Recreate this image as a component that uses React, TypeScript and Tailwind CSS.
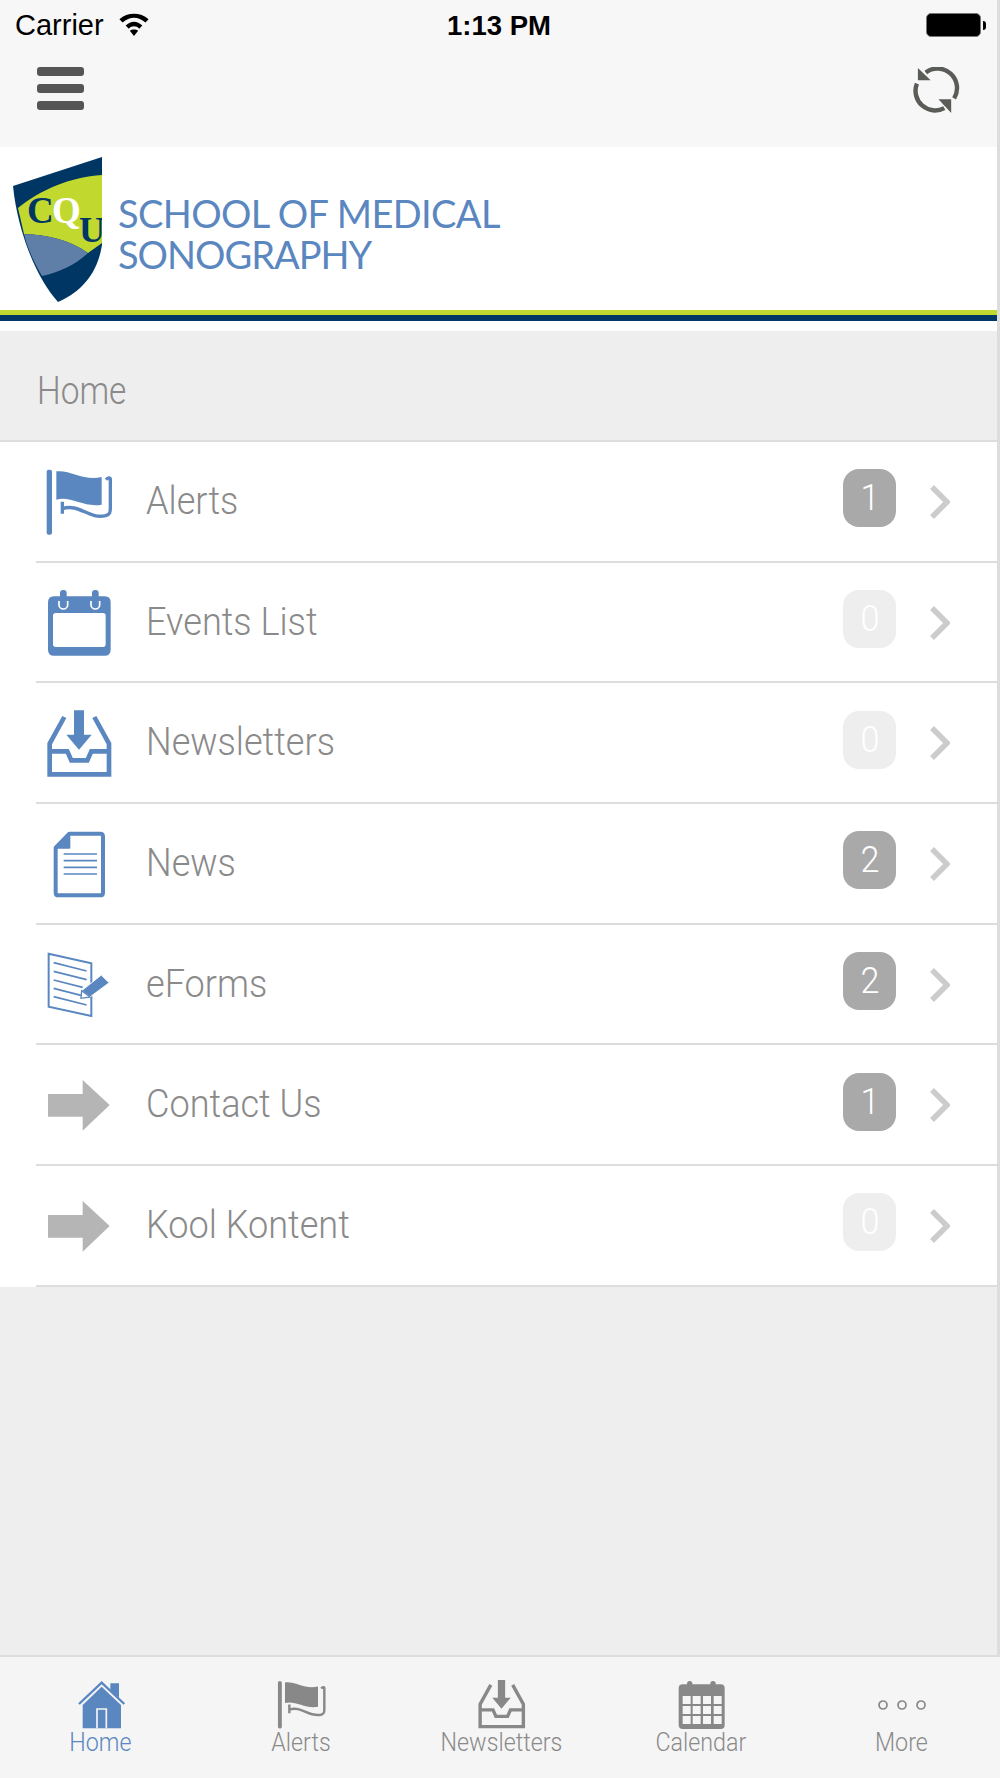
import React from 'react';

const BLUE = '#5b87c0';
const GREY = '#888888';

interface IconProps {
  color?: string;
  width: number;
}

const FlagIcon: React.FC<IconProps> = ({ color = BLUE, width }) => (
  <svg viewBox="70 85 210 205" width={width} height={(width * 205) / 210} fill="none">
    <rect x="78" y="90" width="16" height="195" rx="6" fill={color} />
    <path d="M107 95C150 90 190 125 243 112L243 195C190 205 150 168 107 180Z" fill={color} />
    <path d="M125 186V222M125 207C175 190 205 240 255 228C268 224 269 218 269 205V118C269 113 262 114 256 120" stroke={color} strokeWidth="10" />
  </svg>
);

const CalendarIcon: React.FC<IconProps> = ({ color = BLUE, width }) => (
  <svg viewBox="70 445 210 210" width={width} height={width} fill="none">
    <path fillRule="evenodd" clipRule="evenodd" d="M100 470H252Q270 470 270 488V630Q270 648 252 648H100Q82 648 82 630V488Q82 470 100 470ZM105 520Q97 520 97 528V614Q97 622 105 622H247Q255 622 255 614V528Q255 520 247 520Z" fill={color} />
    <rect x="118" y="451" width="20" height="40" rx="9" fill={color} />
    <rect x="214" y="451" width="20" height="40" rx="9" fill={color} />
    <path d="M115 484V495A13 13 0 0 0 141 495V484M211 484V495A13 13 0 0 0 237 495V484" stroke="#fff" strokeWidth="5" />
  </svg>
);

const InboxIcon: React.FC<IconProps> = ({ color = BLUE, width }) => (
  <svg viewBox="70 808 210 210" width={width} height={width} fill="none">
    <path d="M160 812H190V885H213L175 930L137 885H160Z" fill={color} />
    <path d="M131 832L87 912V1004H265V912L221 832M87 935H140L152 962H200L212 935H265" stroke={color} strokeWidth="14" />
  </svg>
);

const NewsIcon: React.FC = () => (
  <svg viewBox="90 90 170 208" width={56.67} height={69.33} fill="none">
    <path d="M145 101H238Q246 101 246 109V278Q246 286 238 286H112Q104 286 104 278V143Z" stroke={BLUE} strokeWidth="12" strokeLinejoin="round" />
    <path d="M145 101L104 143H145Z" fill={BLUE} stroke={BLUE} strokeWidth="6" strokeLinejoin="round" />
    <path d="M128 162H228M128 182H228M128 202H228M128 222H228" stroke={BLUE} strokeWidth="5" />
  </svg>
);

const FormIcon: React.FC = () => (
  <svg viewBox="80 452 196 208" width={65.33} height={69.33} fill="none">
    <path d="M88 463L216 492V650L88 622Z" stroke={BLUE} strokeWidth="6" />
    <path d="M103 490L202 515M103 516L202 541M103 542L190 564M103 567L185 588M103 592L202 617" stroke={BLUE} strokeWidth="5" />
    <path d="M187 574L246 527L270 550L212 593Z" fill={BLUE} stroke="#fff" strokeWidth="3" />
    <path d="M187 574L185 597L212 593Z" fill="#fff" stroke={BLUE} strokeWidth="4" />
    <path d="M248 529L268 548" stroke="#fff" strokeWidth="3" />
  </svg>
);

const ArrowIcon: React.FC = () => (
  <svg viewBox="83 843 185 152" width={61.67} height={50.67}>
    <path d="M83 885H187V843L268 918L187 995V953H83Z" fill="#b5b5b5" />
  </svg>
);

const HomeIcon: React.FC = () => (
  <svg viewBox="230 115 148 148" width={49.33} height={49.33} fill="none">
    <path d="M330 125H356V172L330 148Z" fill={BLUE} />
    <path d="M236 187L304 123L372 187" stroke={BLUE} strokeWidth="7" />
    <path d="M247 190L304 135L362 190V260H247Z" fill={BLUE} />
    <path d="M290 260V202H318V260" stroke="#f5f5f5" strokeWidth="5" />
  </svg>
);

const TabCalendarIcon: React.FC = () => (
  <svg viewBox="535 115 148 150" width={49.33} height={50} fill={GREY}>
    <rect x="540" y="128" width="138" height="134" rx="12" />
    <circle cx="573" cy="126" r="8" />
    <circle cx="643" cy="126" r="8" />
    {[163, 193, 223].map((y) =>
      [552, 582, 613, 645].map((x) => <rect key={`${x}-${y}`} x={x} y={y} width="24" height="24" fill="#f5f5f5" />)
    )}
  </svg>
);

const MoreIcon: React.FC = () => (
  <svg viewBox="0 0 52 12" width={52} height={12} fill="none" stroke={GREY} strokeWidth="1.7">
    <circle cx="7" cy="6" r="4" />
    <circle cx="26" cy="6" r="4" />
    <circle cx="45" cy="6" r="4" />
  </svg>
);

const Shield: React.FC = () => (
  <svg viewBox="0 0 115 160" width={115} height={160} className="shrink-0 mt-[3px]">
    <path d="M13 186L102 157V245C98 270 85 290 58 302C38 280 18 235 13 186Z" transform="translate(0 -150)" fill="#003663" />
    <path d="M18 208C40 190 70 177 102 175V243L88 253C70 240 48 235 24 234Z" transform="translate(0 -150)" fill="#c1d82f" />
    <path d="M24 234C48 235 70 240 88 253C75 265 60 272 42 276C34 262 28 250 24 234Z" transform="translate(0 -150)" fill="#5f7fa9" />
    <text x="27" y="73" fontFamily="'Liberation Serif', serif" fontWeight="700" fontSize="37" fill="#003663">C</text>
    <text x="52" y="73" fontFamily="'Liberation Serif', serif" fontWeight="700" fontSize="37" fill="#fff">Q</text>
    <svg x="0" y="0" width="102" height="160">
      <text x="79" y="92" fontFamily="'Liberation Serif', serif" fontWeight="700" fontSize="36" fill="#003663">U</text>
    </svg>
  </svg>
);

const rows = [
  { label: 'Alerts', count: 1, icon: <FlagIcon width={70} /> },
  { label: 'Events List', count: 0, icon: <CalendarIcon width={70} /> },
  { label: 'Newsletters', count: 0, icon: <InboxIcon width={70} /> },
  { label: 'News', count: 2, icon: <NewsIcon /> },
  { label: 'eForms', count: 2, icon: <FormIcon /> },
  { label: 'Contact Us', count: 1, icon: <ArrowIcon /> },
  { label: 'Kool Kontent', count: 0, icon: <ArrowIcon /> },
];

const tabs = [
  { label: 'Home', active: true, icon: <HomeIcon /> },
  { label: 'Alerts', icon: <FlagIcon color={GREY} width={51} /> },
  { label: 'Newsletters', icon: <InboxIcon color={GREY} width={51} /> },
  { label: 'Calendar', icon: <TabCalendarIcon /> },
  { label: 'More', icon: <MoreIcon /> },
];

export default function App() {
  return (
    <div className="w-[1000px] h-[1778px] flex flex-col bg-[#eeeeee] overflow-hidden font-['Roboto',sans-serif]">
      <div className="h-[1655px] shrink-0 border-r-[3px] border-[#dddddd] flex flex-col">
        {/* Status bar */}
        <div className="h-[50px] bg-[#f7f7f7] relative flex items-center pl-[15px] pt-[2px] font-['Liberation_Sans',sans-serif] text-[29px] text-black">
          <span>Carrier</span>
          <svg viewBox="0 0 30 24" width={34} height={25} className="ml-[13px] mb-[4px]">
            <path d="M1 7C9 0 21 0 29 7L26 10C19 4 11 4 4 10Z" />
            <path d="M7 13C12 8 18 8 23 13L20 16C17 13 13 13 10 16Z" />
            <path d="M15 23L11 18C13 16.5 17 16.5 19 18Z" />
          </svg>
          <span className="absolute left-[447px] font-bold text-[27.5px]">1:13 PM</span>
          <div className="ml-auto mr-[11px] flex items-center mb-[2px]">
            <div className="w-[55px] h-[24px] bg-black rounded-[5px] border border-[#777777]" />
            <div className="w-[3px] h-[9px] ml-[2px] bg-black rounded-r-full" />
          </div>
        </div>

        {/* Toolbar */}
        <div className="h-[97px] bg-[#f7f7f7] flex justify-between pl-[37px] pr-[37px] pt-[17px]">
          <div className="flex flex-col gap-[8px] w-[47px]">
            <div className="h-[9px] bg-[#555555] rounded-[3px]" />
            <div className="h-[9px] bg-[#555555] rounded-[3px]" />
            <div className="h-[9px] bg-[#555555] rounded-[3px]" />
          </div>
          <svg viewBox="0 0 48 50" width={47} height={49} fill="none">
            <path d="M13 5.5A20 20 0 0 1 42 32M32 42A20 20 0 0 1 4 17" stroke="#5a5c58" strokeWidth="4.5" />
            <path d="M5 1V13.5H18Z M39 47V33H26Z" fill="#5a5c58" />
          </svg>
        </div>

        {/* Logo */}
        <div className="h-[163px] bg-white flex items-start">
          <Shield />
          <div className="mt-[46px] ml-[3px] font-['Lato',sans-serif] text-[#5b87c0] text-[38px] leading-[41px] tracking-[-0.6px]">
            <div>SCHOOL OF MEDICAL</div>
            <div className="tracking-[-1px]">SONOGRAPHY</div>
          </div>
        </div>
        <div className="h-[5px] bg-[#c1d82f]" />
        <div className="h-[6px] bg-[#003663]" />
        <div className="h-[10px] bg-white" />

        {/* Section title */}
        <div className="h-[111px] bg-[#eeeeee] border-b-2 border-[#dddddd] flex items-center pl-[37px] pt-[11px] text-[38px] font-light text-[#8a8a8a]">
          <span className="origin-left scale-x-[0.88]">Home</span>
        </div>

        {/* Menu list */}
        <div className="bg-white pl-[36px]">
          {rows.map((row) => (
            <div key={row.label} className="h-[120.7px] border-b-2 border-[#dddddd] flex items-center">
              <div className="w-[84px] h-[70px] ml-[1px] mt-[2px] flex items-center justify-center">{row.icon}</div>
              <span className="ml-[25px] text-[38px] font-light text-[#8a8a8a] origin-left scale-x-[0.95]">{row.label}</span>
              <div
                className={`ml-auto mb-[6px] w-[53px] h-[58px] rounded-[16px] flex items-center justify-center text-[36px] font-light text-white ${
                  row.count > 0 ? 'bg-[#a9a9a9]' : 'bg-[#eeeeee]'
                }`}
              >
                <span className="scale-x-[0.95]">{row.count}</span>
              </div>
              <svg viewBox="0 0 20 34" width={20} height={34} fill="none" className="ml-[34px] mr-[47px] mt-[1px]">
                <path d="M2 2L17 17L2 32" stroke="#cccccc" strokeWidth="5.5" />
              </svg>
            </div>
          ))}
        </div>
      </div>

      {/* Tab bar */}
      <div className="flex-1 bg-[#f5f5f5] border-t-2 border-[#dddddd] grid grid-cols-5 pt-[22px]">
        {tabs.map((tab) => (
          <div key={tab.label} className="flex flex-col items-center">
            <div className={`h-[51px] flex items-center justify-center ${tab.active ? 'ml-[4px]' : 'ml-[3px]'}`}>{tab.icon}</div>
            <span
              className={`text-[25px] leading-[26px] font-light scale-x-[0.93] ${
                tab.active ? 'text-[#5b87c0]' : 'ml-[2px] text-[#8a8a8a]'
              }`}
            >
              {tab.label}
            </span>
          </div>
        ))}
      </div>
    </div>
  );
}
